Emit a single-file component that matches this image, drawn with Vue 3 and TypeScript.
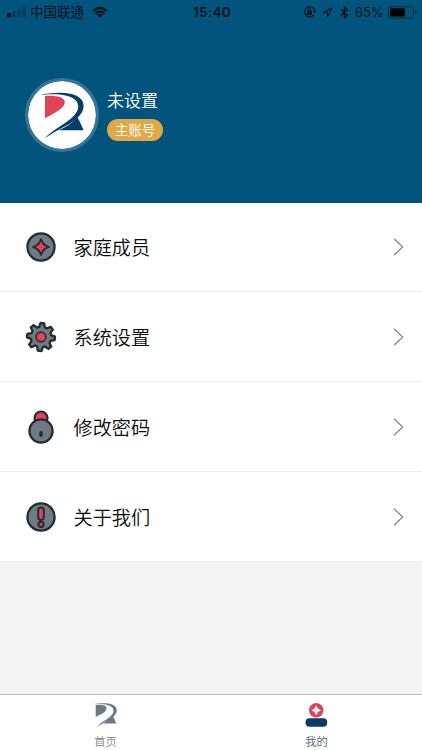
<script setup lang="ts">
interface MenuItem {
  id: string
  label: string
}

const menu: MenuItem[] = [
  { id: 'family', label: '家庭成员' },
  { id: 'system', label: '系统设置' },
  { id: 'password', label: '修改密码' },
  { id: 'about', label: '关于我们' },
]

// Outline of an eight-toothed gear centred on (16, 16)
const gearPath = (() => {
  const points: string[] = []
  const teeth = 8
  for (let i = 0; i < teeth; i++) {
    const base = (i / teeth) * Math.PI * 2 + 0.1
    const steps: [number, number][] = [[-0.28, 10.3], [-0.13, 14], [0.13, 14], [0.28, 10.3]]
    for (const [offset, radius] of steps) {
      const x = 16 + Math.cos(base + offset) * radius
      const y = 16 + Math.sin(base + offset) * radius
      points.push(`${x.toFixed(2)} ${y.toFixed(2)}`)
    }
  }
  return `M${points.join('L')}Z`
})()
</script>

<template>
  <div class="screen">
    <header class="hero">
      <div class="status">
        <div class="carrier">
          <svg class="signal" width="20" height="12" viewBox="0 0 20 12">
            <rect x="0" y="7" width="4" height="4.5" rx="1" />
            <g opacity=".28">
              <rect x="5" y="5" width="4" height="6.5" rx="1" />
              <rect x="10" y="3" width="4" height="8.5" rx="1" />
              <rect x="15" y="0.5" width="4" height="11" rx="1" />
            </g>
          </svg>
          <span class="operator">中国联通</span>
          <svg class="wifi" width="16" height="12" viewBox="0 0 16 12">
            <path d="M.3 4.1Q8-3.2 15.7 4.1L14.1 5.8Q8 .3 1.9 5.8Z" />
            <path d="M2.8 6.7Q8 2 13.2 6.7L11.6 8.4Q8 5.1 4.4 8.4Z" />
            <path d="M5.3 9.2Q8 6.9 10.7 9.2L8 11.8Z" />
          </svg>
        </div>
        <span class="clock">15:40</span>
        <div class="indicators">
          <svg width="14" height="14" viewBox="0 0 14 14">
            <path d="M11.1 9.8A5.2 5.2 0 1 1 11.7 5.2" fill="none" stroke="#05131d" stroke-width="1.1" />
            <path d="M9.9 5.7h3.6l-1.8 2.6z" />
            <rect x="4" y="6.3" width="5" height="3.7" rx=".4" />
            <path d="M5.1 6.5V5.2a1.4 1.4 0 0 1 2.8 0v1.3" fill="none" stroke="#05131d" />
          </svg>
          <svg class="location" width="11" height="11" viewBox="0 0 11 11">
            <path d="M1 5.6 10 1 5.7 10 5.3 5.7Z" fill="none" stroke="#05131d" stroke-width="1.1" stroke-linejoin="round" />
          </svg>
          <svg class="bluetooth" width="9" height="13" viewBox="0 0 9 13">
            <path d="m1 3.5 6.4 5.7-3 2.8V1l3 2.8L1 9.5" fill="none" stroke="#05131d" stroke-width="1.3" />
          </svg>
          <span class="percent">65%</span>
          <svg class="battery" width="29" height="13" viewBox="0 0 29 13">
            <rect x=".5" y=".8" width="25" height="11.2" rx="2.2" fill="none" stroke="#05131d" stroke-opacity=".6" />
            <rect x="2" y="2.3" width="15" height="8.2" rx=".7" fill="#000" />
            <path d="M27 4.5q1.6.5 1.6 1.9T27 8.3z" opacity=".6" />
          </svg>
        </div>
      </div>

      <div class="profile">
        <div class="avatar">
          <svg width="45" height="47" viewBox="41 91 45 47">
            <path d="M46 95C56 94.2 65.8 96 65.8 101.2C65.8 107.5 54.5 112.5 46 117.2Z" fill="#df4358" />
            <path d="M41 94.1C57 90.3 84.6 89.8 84.6 105C84.6 119.5 59 127.5 46 137.2C56.5 125.5 79.2 118 79.2 105.5C79.2 93 56 92.3 41 94.1Z" fill="#053c68" />
            <path d="M78.6 116 84.6 129.2H59.8Q71 124.5 78.6 116Z" fill="#053c68" />
          </svg>
        </div>
        <div class="identity">
          <span class="name">未设置</span>
          <span class="badge">主账号</span>
        </div>
      </div>
    </header>

    <main class="menu">
      <div v-for="item in menu" :key="item.id" class="row">
        <svg v-if="item.id === 'family'" class="icon" viewBox="0 0 32 32">
          <circle cx="16" cy="16" r="13.6" fill="#6d7b85" stroke="#272a2e" stroke-width="2.3" />
          <path d="M16 7.3Q18.3 13.7 24.7 16Q18.3 18.3 16 24.7Q13.7 18.3 7.3 16Q13.7 13.7 16 7.3Z" fill="#272a2e" stroke="#272a2e" stroke-linejoin="round" />
          <path d="M16 11Q17.3 14.7 21 16Q17.3 17.3 16 21Q14.7 17.3 11 16Q14.7 14.7 16 11Z" fill="#e2435b" stroke="#e2435b" stroke-width=".6" />
        </svg>
        <svg v-else-if="item.id === 'system'" class="icon" viewBox="0 0 32 32">
          <path :d="gearPath" fill="#6d7b85" stroke="#272a2e" stroke-width="2.3" stroke-linejoin="round" />
          <circle cx="16" cy="16" r="4.9" fill="#e2435b" stroke="#272a2e" stroke-width="1.6" />
        </svg>
        <svg v-else-if="item.id === 'password'" class="icon lock" viewBox="0 0 32 36">
          <circle cx="16" cy="9" r="6.5" fill="#e2435b" stroke="#272a2e" stroke-width="2.2" />
          <circle cx="16" cy="22" r="11.6" fill="#6d7b85" stroke="#272a2e" stroke-width="2.2" />
          <rect x="14.3" y="22" width="3.4" height="6" rx="1.7" fill="#272a2e" />
        </svg>
        <svg v-else class="icon" viewBox="0 0 32 32">
          <circle cx="16" cy="16" r="13.6" fill="#6d7b85" stroke="#272a2e" stroke-width="2.3" />
          <rect x="13.2" y="6.6" width="5.6" height="12.4" rx="2.8" fill="#e2435b" stroke="#272a2e" stroke-width="2" />
          <circle cx="16" cy="23.3" r="2.6" fill="#e2435b" stroke="#272a2e" stroke-width="2" />
        </svg>
        <span class="label">{{ item.label }}</span>
        <svg class="chevron" width="11" height="18" viewBox="0 0 11 18">
          <path d="m1 .7 8.7 8.3L1 17.3" fill="none" stroke="#7d858b" stroke-width="1.2" />
        </svg>
      </div>
    </main>

    <nav class="tabs">
      <div class="tab">
        <svg width="24" height="25" viewBox="0 0 24 25">
          <path d="M1.7 2C8 1.5 12.5 2.2 12.5 5.5C12.5 9 6.6 11.5 1.7 14Z" fill="#6c7a84" />
          <path d="M.2 1.1C9 -.6 22.8-.5 22.8 7.3C22.8 15 9 19.5 2.4 24.5C7.5 18 19.5 14.5 19.5 7.8C19.5 1.2 8 .9 .2 1.1Z" fill="#6c7a84" />
          <path d="m19 12.8 3.2 7.7H9.4Q14.5 17 19 12.8Z" fill="#6c7a84" />
        </svg>
        <span>首页</span>
      </div>
      <div class="tab active">
        <svg width="24" height="25" viewBox="0.8 0 24 25">
          <circle cx="12" cy="7.3" r="7.2" fill="#de4257" />
          <path d="M12 2.9Q13 6.3 16.4 7.3Q13 8.3 12 11.7Q11 8.3 7.6 7.3Q11 6.3 12 2.9Z" fill="#fff" stroke="#fff" stroke-width=".5" />
          <rect x="1.3" y="15.3" width="21.7" height="8.5" rx="4.1" fill="#063e68" />
        </svg>
        <span>我的</span>
      </div>
    </nav>
  </div>
</template>

<style>
body {
  margin: 0;
}
</style>

<style scoped>
.screen {
  display: flex;
  flex-direction: column;
  width: 422px;
  height: 750px;
  overflow: hidden;
  background: #f4f4f4;
  font-family: "Noto Sans CJK SC", sans-serif;
  font-weight: 350;
}
svg {
  display: block;
  flex: none;
}
.hero {
  flex: none;
  height: 202.5px;
  background: #02547d;
}
.status {
  display: grid;
  grid-template-columns: 1fr auto 1fr;
  align-items: center;
  height: 24px;
  padding: 0 5px 0 7px;
  color: #05131d;
  fill: #05131d;
}
.carrier,
.indicators {
  display: flex;
  align-items: center;
}
.operator {
  margin-left: 3px;
  padding-bottom: 2px;
  font: 13.5px/22px "Noto Sans CJK SC", sans-serif;
}
.wifi {
  margin-left: 8px;
}
.clock {
  font: 600 13.5px/24px Inter, sans-serif;
  letter-spacing: 0.35px;
}
.indicators {
  justify-content: flex-end;
}
.indicators svg:first-child {
  margin-right: -1px;
}
.location {
  margin-left: 6px;
}
.bluetooth {
  margin-left: 7px;
}
.percent {
  margin-left: 6px;
  font: 13px/24px Inter, sans-serif;
  letter-spacing: 0.2px;
}
.battery {
  margin-left: 4px;
}
.profile {
  display: flex;
  align-items: center;
  padding: 54px 0 0 25px;
}
.avatar {
  display: flex;
  align-items: center;
  justify-content: center;
  box-sizing: border-box;
  width: 74px;
  height: 74px;
  border: 3.5px solid #337699;
  border-radius: 50%;
  background: #fff;
  background-clip: padding-box;
}
.identity {
  display: flex;
  flex-direction: column;
  align-items: flex-start;
  margin-left: 8px;
  padding-bottom: 2px;
}
.name {
  color: #fff;
  font-size: 17px;
  line-height: 24px;
}
.badge {
  box-sizing: border-box;
  height: 22px;
  margin-top: 7px;
  padding: 0 8px;
  border-radius: 11px;
  background: #dfa948;
  color: #fff;
  font-size: 13.4px;
  line-height: 21px;
}
.menu {
  flex: none;
  background: #fff;
}
.row {
  display: flex;
  align-items: center;
  box-sizing: border-box;
  height: 89.8px;
  padding: 1px 18px 0 25px;
  border-bottom: 1.5px solid #ececec;
}
.icon {
  width: 32px;
  height: 32px;
}
.lock {
  height: 36px;
}
.label {
  flex: 1;
  margin-left: 16.5px;
  color: #0c0c0c;
  font-size: 19.2px;
  line-height: 28px;
}
.tabs {
  display: grid;
  grid-template-columns: 1fr 1fr;
  box-sizing: border-box;
  height: 56px;
  margin-top: auto;
  border-top: 1px solid #bdbdbd;
  background: #fff;
}
.tab {
  display: flex;
  flex-direction: column;
  align-items: center;
  padding-top: 8px;
  color: #858585;
  font-size: 11.3px;
  line-height: 16px;
}
.tab span {
  margin-top: 5px;
}
.tab.active {
  color: #526473;
}
</style>
